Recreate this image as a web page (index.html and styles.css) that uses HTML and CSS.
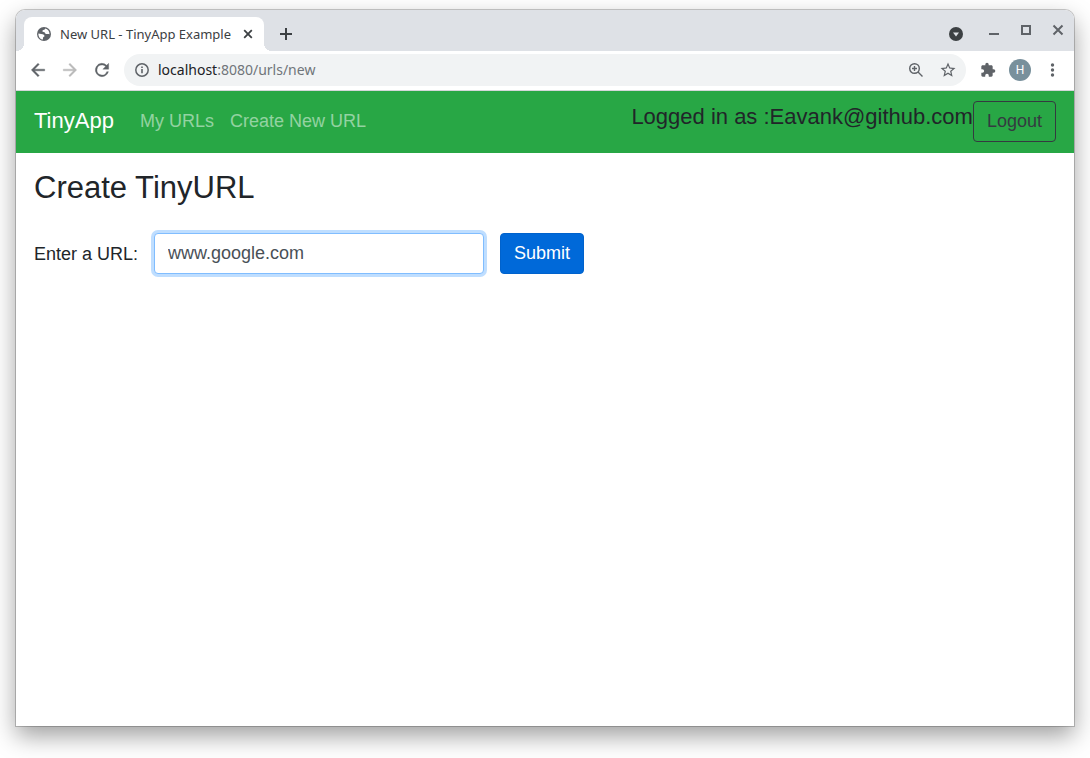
FILE: index.html
```html
<!DOCTYPE html>
<html lang="en">
<head>
<meta charset="utf-8">
<meta name="viewport" content="width=device-width, initial-scale=1">
<title>New URL - TinyApp Example</title>
<link rel="stylesheet" href="styles.css">
</head>
<body>
<div class="window">
  <div class="tabstrip">
    <div class="tab">
      <svg class="tab-icon" viewBox="0 0 14 14" width="14" height="14" aria-hidden="true"><circle cx="7" cy="7" r="7" fill="#5f6368"/><path d="M1.400 6.400L5.600 7.300c1.200.3 1.900.9 1.900 1.700 0 .8-1.100.8-1.400 1.500l-.2 2C3.200 12.200 1.200 9.700 1.400 6.400z" fill="#fff"/><path d="M8.200 1.400L7.700 2.500C7.200 3.100 5.400 3 5.300 4.100c0 .8 1.200.9 2 1.100.9.200.7 1.400 1.500 1.700.9.300 2.200-.2 3.700.3C12.600 4.300 11 2.100 8.200 1.400z" fill="#fff"/></svg>
      <span class="tab-title">New URL - TinyApp Example</span>
      <button class="plain tab-close" type="button" aria-label="Close tab"><svg viewBox="0 0 10 10" width="10" height="10"><path d="M1.200 1.200l7.600 7.600M8.800 1.200l-7.600 7.600" stroke="#3c4043" stroke-width="1.800" fill="none"/></svg></button>
    </div>
    <button class="plain new-tab" type="button" aria-label="New tab"><svg viewBox="0 0 12 12" width="12" height="12"><path d="M6 0v12M0 6h12" stroke="#3c4043" stroke-width="2"/></svg></button>
    <div class="controls">
      <button class="plain tool tab-search" type="button" aria-label="Search tabs"><svg viewBox="0 0 24 24" width="24" height="24"><circle cx="12" cy="16" r="7" fill="#3c4043"/><path d="M9 14.500h6l-3 4z" fill="#dee1e6"/></svg></button>
      <button class="plain tool" type="button" aria-label="Minimize"><svg viewBox="0 0 24 24" width="24" height="24"><path d="M7 16h10" stroke="#5f6368" stroke-width="2"/></svg></button>
      <button class="plain tool" type="button" aria-label="Maximize"><svg viewBox="0 0 24 24" width="24" height="24"><path d="M8 8h8v8h-8z" fill="none" stroke="#5f6368" stroke-width="2"/></svg></button>
      <button class="plain tool" type="button" aria-label="Close window"><svg viewBox="0 0 24 24" width="24" height="24"><path d="M7.500 7.500l9 9M16.500 7.500l-9 9" fill="none" stroke="#5f6368" stroke-width="2"/></svg></button>
    </div>
  </div>
  <div class="toolbar">
    <button class="plain tool" type="button" aria-label="Back"><svg viewBox="0 0 24 24" width="20" height="20"><path fill="#5f6368" d="M20 11H7.800l5.600-5.600L12 4l-8 8 8 8 1.400-1.400L7.800 13H20z" stroke="#5f6368" stroke-width=".5"/></svg></button>
    <button class="plain tool" type="button" aria-label="Forward"><svg viewBox="0 0 24 24" width="20" height="20"><path fill="#bababa" d="M4 13h12.200l-5.600 5.600L12 20l8-8-8-8-1.400 1.400 5.600 5.600H4z" stroke="#bababa" stroke-width=".5"/></svg></button>
    <button class="plain tool" type="button" aria-label="Reload"><svg viewBox="0 0 24 24" width="20" height="20"><path fill="#5f6368" stroke="#5f6368" stroke-width=".4" d="M17.650 6.350A8 8 0 1 0 19.730 14h-2.080A6 6 0 1 1 12 6c1.660 0 3.140.69 4.220 1.780L13 11h7V4z"/></svg></button>
    <div class="omnibox">
      <svg viewBox="0 0 14 14" width="14" height="14" aria-hidden="true"><circle cx="7" cy="7" r="6.200" fill="none" stroke="#5f6368" stroke-width="1.500"/><path d="M7 6v4.300M7 3.500v1.600" stroke="#5f6368" stroke-width="1.600"/></svg>
      <div class="address"><span class="host">localhost</span>:8080/urls/new</div>
      <button class="plain tool" type="button" aria-label="Zoom"><svg viewBox="0 0 16 16" width="16" height="16"><g fill="none" stroke="#5f6368" stroke-width="1.400"><circle cx="6.500" cy="6.500" r="4.800"/><path d="M10 10l4.500 4.500M6.500 4v5M4 6.500h5"/></g></svg></button>
      <button class="plain tool" type="button" aria-label="Bookmark this page"><svg viewBox="0 0 24 24" width="18" height="18"><path fill="#5f6368" d="M22 9.240l-7.190-.62L12 2 9.190 8.630 2 9.240l5.460 4.730L5.820 21 12 17.270 18.180 21l-1.630-7.030zM12 15.400l-3.760 2.270 1-4.280-3.320-2.880 4.380-.38L12 6.100l1.710 4.040 4.380.38-3.320 2.880 1 4.280z"/></svg></button>
    </div>
    <button class="plain tool" type="button" aria-label="Extensions"><svg viewBox="0 0 24 24" width="16" height="16"><path fill="#5f6368" d="M20.500 11H19V7c0-1.100-.9-2-2-2h-4V3.500a2.500 2.500 0 0 0-5 0V5H4c-1.100 0-2 .9-2 2v3.800h1.500a2.700 2.700 0 0 1 0 5.400H2V20c0 1.100.9 2 2 2h3.800v-1.500a2.700 2.700 0 0 1 5.400 0V22H17c1.100 0 2-.9 2-2v-4h1.500a2.500 2.500 0 0 0 0-5z"/></svg></button>
    <button class="plain tool" type="button" aria-label="Profile"><span class="avatar">H</span></button>
    <button class="plain tool" type="button" aria-label="Menu"><svg viewBox="0 0 16 16" width="16" height="16"><g fill="#5f6368"><circle cx="8.500" cy="3" r="1.700"/><circle cx="8.500" cy="8" r="1.700"/><circle cx="8.500" cy="13" r="1.700"/></g></svg></button>
  </div>
  <header class="navbar">
    <a class="brand" href="#">TinyApp</a>
    <nav class="nav">
      <a class="nav-link" href="#">My URLs</a>
      <a class="nav-link" href="#">Create New URL</a>
    </nav>
    <form class="account">
      <h5 class="account-name">Logged in as :Eavank@github.com</h5>
      <button class="btn btn-outline" type="button">Logout</button>
    </form>
  </header>
  <main class="content">
    <h3 class="title">Create TinyURL</h3>
    <form class="url-form">
      <label for="long-url">Enter a URL:</label>
      <input class="field" id="long-url" type="text" value="www.google.com">
      <button class="btn btn-primary" type="button">Submit</button>
    </form>
  </main>
</div>
</body>
</html>
```
FILE: styles.css
```css
* {
  box-sizing: border-box;
}

body {
  margin: 0;
  padding: 10px 16px 32px;
  min-height: 100vh;
  display: flex;
  background: #fff;
  color: #212529;
  font: 18px/26px "Liberation Sans", Arial, sans-serif;
}

.window {
  flex: 1;
  min-width: 0;
  display: flex;
  flex-direction: column;
  border-radius: 9px 9px 0 0;
  background: #fff;
  box-shadow: 0 0 0 1px rgba(0, 0, 0, .2), 0 10px 24px rgba(0, 0, 0, .38);
}

.plain {
  display: flex;
  align-items: center;
  justify-content: center;
  border: 0;
  padding: 0;
  background: none;
}

.tool {
  width: 32px;
  height: 32px;
}

.tabstrip {
  display: flex;
  align-items: flex-end;
  height: 41px;
  padding-left: 8px;
  border-radius: 9px 9px 0 0;
  background: #dee1e6;
}

.tab {
  position: relative;
  display: flex;
  align-items: center;
  width: 240px;
  height: 34px;
  padding: 0 8px 0 13px;
  border-radius: 8px 8px 0 0;
  background: #fff;
  color: #3c4043;
  font: 13px/18px "Noto Sans", "Open Sans", sans-serif;
}

.tab::before,
.tab::after {
  content: "";
  position: absolute;
  bottom: 0;
  width: 8px;
  height: 8px;
}

.tab::before {
  right: 100%;
  background: radial-gradient(circle at 0 0, #dee1e6 8px, #fff 8px);
}

.tab::after {
  left: 100%;
  background: radial-gradient(circle at 100% 0, #dee1e6 8px, #fff 8px);
}

.tab-title {
  flex: 1;
  margin-left: 9px;
  white-space: nowrap;
}

.tab-close {
  width: 16px;
  height: 16px;
}

.new-tab {
  width: 28px;
  height: 34px;
  margin-left: 8px;
}

.controls {
  display: flex;
  align-self: flex-start;
  align-items: center;
  height: 40px;
  margin-left: auto;
}

.tab-search {
  margin-right: 6px;
}

.toolbar {
  display: flex;
  align-items: center;
  height: 40px;
  padding: 0 6px 1px;
  border-bottom: 1px solid #d5d7da;
}

.omnibox {
  flex: 1;
  display: flex;
  align-items: center;
  height: 32px;
  margin: 0 6px;
  padding: 0 2px 0 11px;
  border-radius: 16px;
  background: #f1f3f4;
}

.address {
  flex: 1;
  margin-left: 9px;
  color: #70757a;
  font: 14px/20px "Noto Sans", "Open Sans", sans-serif;
}

.host {
  color: #202124;
}

.avatar {
  width: 22px;
  height: 22px;
  border-radius: 50%;
  background: #78909c;
  color: #fff;
  font: 12px/22px Roboto, sans-serif;
  text-align: center;
}

.navbar {
  display: flex;
  align-items: center;
  min-height: 62px;
  padding: 9px 18px 11px;
  background: #28a745;
}

.brand {
  margin-right: 18px;
  color: #fff;
  font-size: 22px;
  text-decoration: none;
}

.nav {
  display: flex;
}

.nav-link {
  padding: 8px;
  color: rgba(255, 255, 255, .5);
  text-decoration: none;
}

.account {
  display: flex;
  align-items: center;
  margin-left: auto;
}

.account-name {
  margin: 0 0 9px;
  font-size: 22px;
  font-weight: 400;
}

.btn {
  height: 41px;
  padding: 0 13px 1px;
  border: 1px solid;
  border-radius: 4px;
  font: inherit;
}

.btn-outline {
  border-color: #343a40;
  background: none;
  color: #343a40;
}

.btn-primary {
  border-color: #0062cc;
  background: #0069d9;
  color: #fff;
}

.content {
  padding: 16px 18px;
}

.title {
  margin: 0 0 27px;
  font-size: 31px;
  line-height: 37px;
  font-weight: 400;
}

.url-form {
  display: flex;
  flex-wrap: wrap;
  align-items: center;
  gap: 16px;
}

.field {
  width: 330px;
  height: 41px;
  padding: 0 13px;
  border: 1px solid #80bdff;
  border-radius: 4px;
  outline: 0;
  background: #fff;
  color: #495057;
  font: inherit;
  box-shadow: 0 0 0 3px #bfdeff;
}
```
